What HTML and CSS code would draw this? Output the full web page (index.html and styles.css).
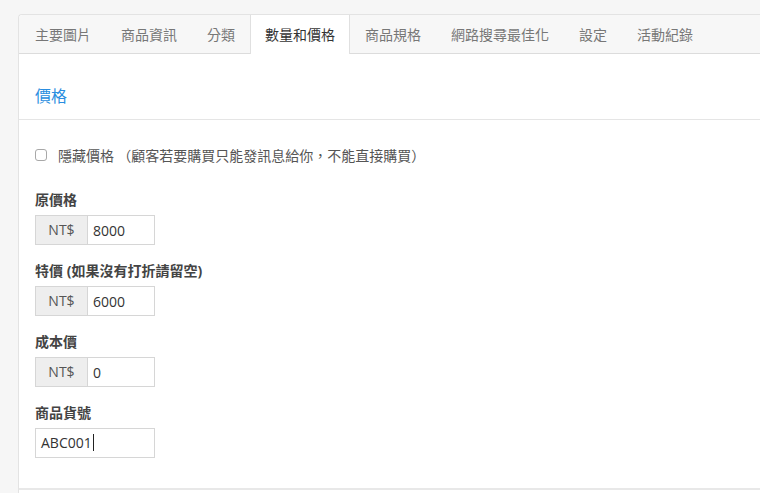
FILE: index.html
```html
<!DOCTYPE html>
<html lang="zh-Hant">
<head>
    <meta charset="UTF-8">
    <meta name="viewport" content="width=device-width, initial-scale=1.0">
    <title>數量和價格</title>
    <link rel="stylesheet" href="styles.css">
</head>
<body>
    <div class="panel">
        <ul class="tabs">
            <li>主要圖片</li>
            <li>商品資訊</li>
            <li>分類</li>
            <li class="active">數量和價格</li>
            <li>商品規格</li>
            <li>網路搜尋最佳化</li>
            <li>設定</li>
            <li>活動紀錄</li>
        </ul>

        <div class="section-head">價格</div>

        <div class="form">
            <label class="check-row">
                <input type="checkbox">
                <span>隱藏價格 （顧客若要購買只能發訊息給你，不能直接購買）</span>
            </label>

            <div class="field">
                <div class="field-label">原價格</div>
                <div class="input-group">
                    <span class="addon">NT$</span>
                    <input type="text" value="8000">
                </div>
            </div>

            <div class="field">
                <div class="field-label">特價 (如果沒有打折請留空)</div>
                <div class="input-group">
                    <span class="addon">NT$</span>
                    <input type="text" value="6000">
                </div>
            </div>

            <div class="field">
                <div class="field-label">成本價</div>
                <div class="input-group">
                    <span class="addon">NT$</span>
                    <input type="text" value="0">
                </div>
            </div>

            <div class="field">
                <div class="field-label">商品貨號</div>
                <div class="text-box">ABC001<span class="caret"></span></div>
            </div>
        </div>
    </div>
</body>
</html>
```

FILE: styles.css
```css
body {
    margin: 0;
    background-color: #f6f6f6;
    font-family: "Open Sans", "Noto Sans CJK TC", sans-serif;
    color: #333;
    overflow: hidden;
}
.panel {
    margin: 14px 0 0 18px;
    padding-bottom: 3px;
    background-color: #fff;
    border: 1px solid #e3e3e3;
    border-right: none;
    border-bottom: none;
    border-radius: 4px 0 0 0;
}
.tabs {
    display: flex;
    margin: 0;
    padding: 0 0 0 1px;
    list-style: none;
    background-color: #f7f7f7;
    border-bottom: 1px solid #dcdcdc;
    border-radius: 4px 0 0 0;
}
.tabs li {
    height: 38px;
    line-height: 38px;
    padding: 0 14px;
    border: 1px solid transparent;
    border-top: none;
    border-bottom: none;
    font-family: "Noto Sans CJK TC", sans-serif;
    font-size: 14px;
    color: #777;
    margin-bottom: -1px;
}
.tabs li.active {
    background-color: #fff;
    color: #333;
    border-color: #e0e0e0;
    height: 39px;
}
.section-head {
    padding: 31px 16px 14px;
    line-height: 20px;
    font-family: "Noto Sans CJK TC", sans-serif;
    font-size: 16px;
    color: #2a8ee0;
    border-bottom: 1px solid #e5e5e5;
}
.form {
    padding: 25px 16px 30px;
    border-bottom: 2px solid #e8e8e8;
}
.check-row {
    display: flex;
    align-items: center;
    height: 20px;
    font-family: "Noto Sans CJK TC", sans-serif;
    font-size: 14px;
    color: #555;
}
.check-row input {
    appearance: none;
    width: 12px;
    height: 12px;
    margin: 0 11px 0 0;
    border: 1px solid #a8a8a8;
    border-radius: 3px;
    background-color: #fff;
}
.field {
    margin-top: 26px;
}
.field + .field {
    margin-top: 17px;
}
.field-label {
    height: 18px;
    line-height: 18px;
    margin-bottom: 6px;
    font-size: 14px;
    font-weight: 700;
    color: #444;
}
.input-group {
    display: flex;
    width: 120px;
    height: 30px;
}
.addon {
    width: 51px;
    line-height: 28px;
    text-align: center;
    font-size: 14px;
    color: #555;
    background-color: #eee;
    border: 1px solid #d6d6d6;
    border-right: none;
}
.input-group input {
    width: 68px;
    box-sizing: border-box;
    border: 1px solid #d6d6d6;
    padding: 0 5px;
    font-family: "Open Sans", sans-serif;
    font-size: 14px;
    color: #333;
    outline: none;
}
.text-box {
    width: 120px;
    height: 30px;
    box-sizing: border-box;
    border: 1px solid #d6d6d6;
    padding: 0 5px;
    line-height: 28px;
    font-size: 14px;
    color: #333;
}
.caret {
    display: inline-block;
    width: 1px;
    height: 17px;
    margin-left: 1px;
    vertical-align: -3px;
    background-color: #222;
}
```
